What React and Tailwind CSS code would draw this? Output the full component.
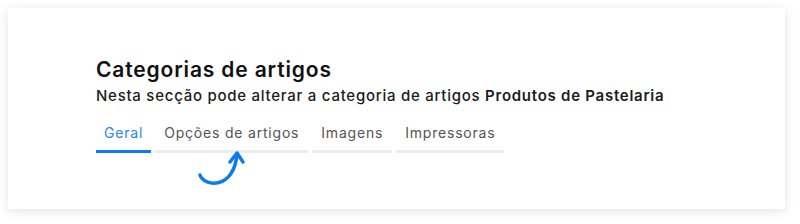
import React from 'react';

const tabs = ['Geral', 'Opções de artigos', 'Imagens', 'Impressoras'];

export default function App() {
  return (
    <div className="w-[800px] h-[224px] bg-white p-2 font-['Inter',sans-serif]">
      <div className="h-[201px] w-[777px] bg-white shadow-[0_2px_10px_rgba(0,0,0,0.11)] pl-[88px] pt-[50px]">
        <h1 className="text-[21px] leading-[24px] tracking-[0.85px] font-semibold text-[#111]">Categorias de artigos</h1>
        <p className="mt-[4px] text-[15px] leading-[20px] tracking-[0.74px] font-medium text-[#1c1c1c]">
          Nesta secção pode alterar a categoria de artigos <span className="font-semibold">Produtos de Pastelaria</span>
        </p>
        <div className="mt-[13px] flex gap-1">
          {tabs.map((t, i) => (
            <div
              key={t}
              className={
                i === 0
                  ? 'px-2 pt-[3px] pb-[7px] border-b-[3px] border-[#0a7cf0] text-[14px] tracking-[0.8px] text-[#2b85f0]'
                  : 'px-[9px] pt-[3px] pb-[7px] border-b-[3px] border-[#ececec] text-[14px] tracking-[0.8px] text-[#555]'
              }
            >
              {t}
            </div>
          ))}
        </div>
        <svg className="ml-[100px] -mt-[3px]" width="52" height="40" viewBox="0 0 52 40" fill="none">
          <path d="M4 25 C 8 37, 38 40, 41 4" stroke="#0a7cf0" strokeWidth="3.5" strokeLinecap="round" />
          <path d="M34 12 L41 3 L47 12" stroke="#0a7cf0" strokeWidth="3.5" strokeLinecap="round" strokeLinejoin="round" />
        </svg>
      </div>
    </div>
  );
}
